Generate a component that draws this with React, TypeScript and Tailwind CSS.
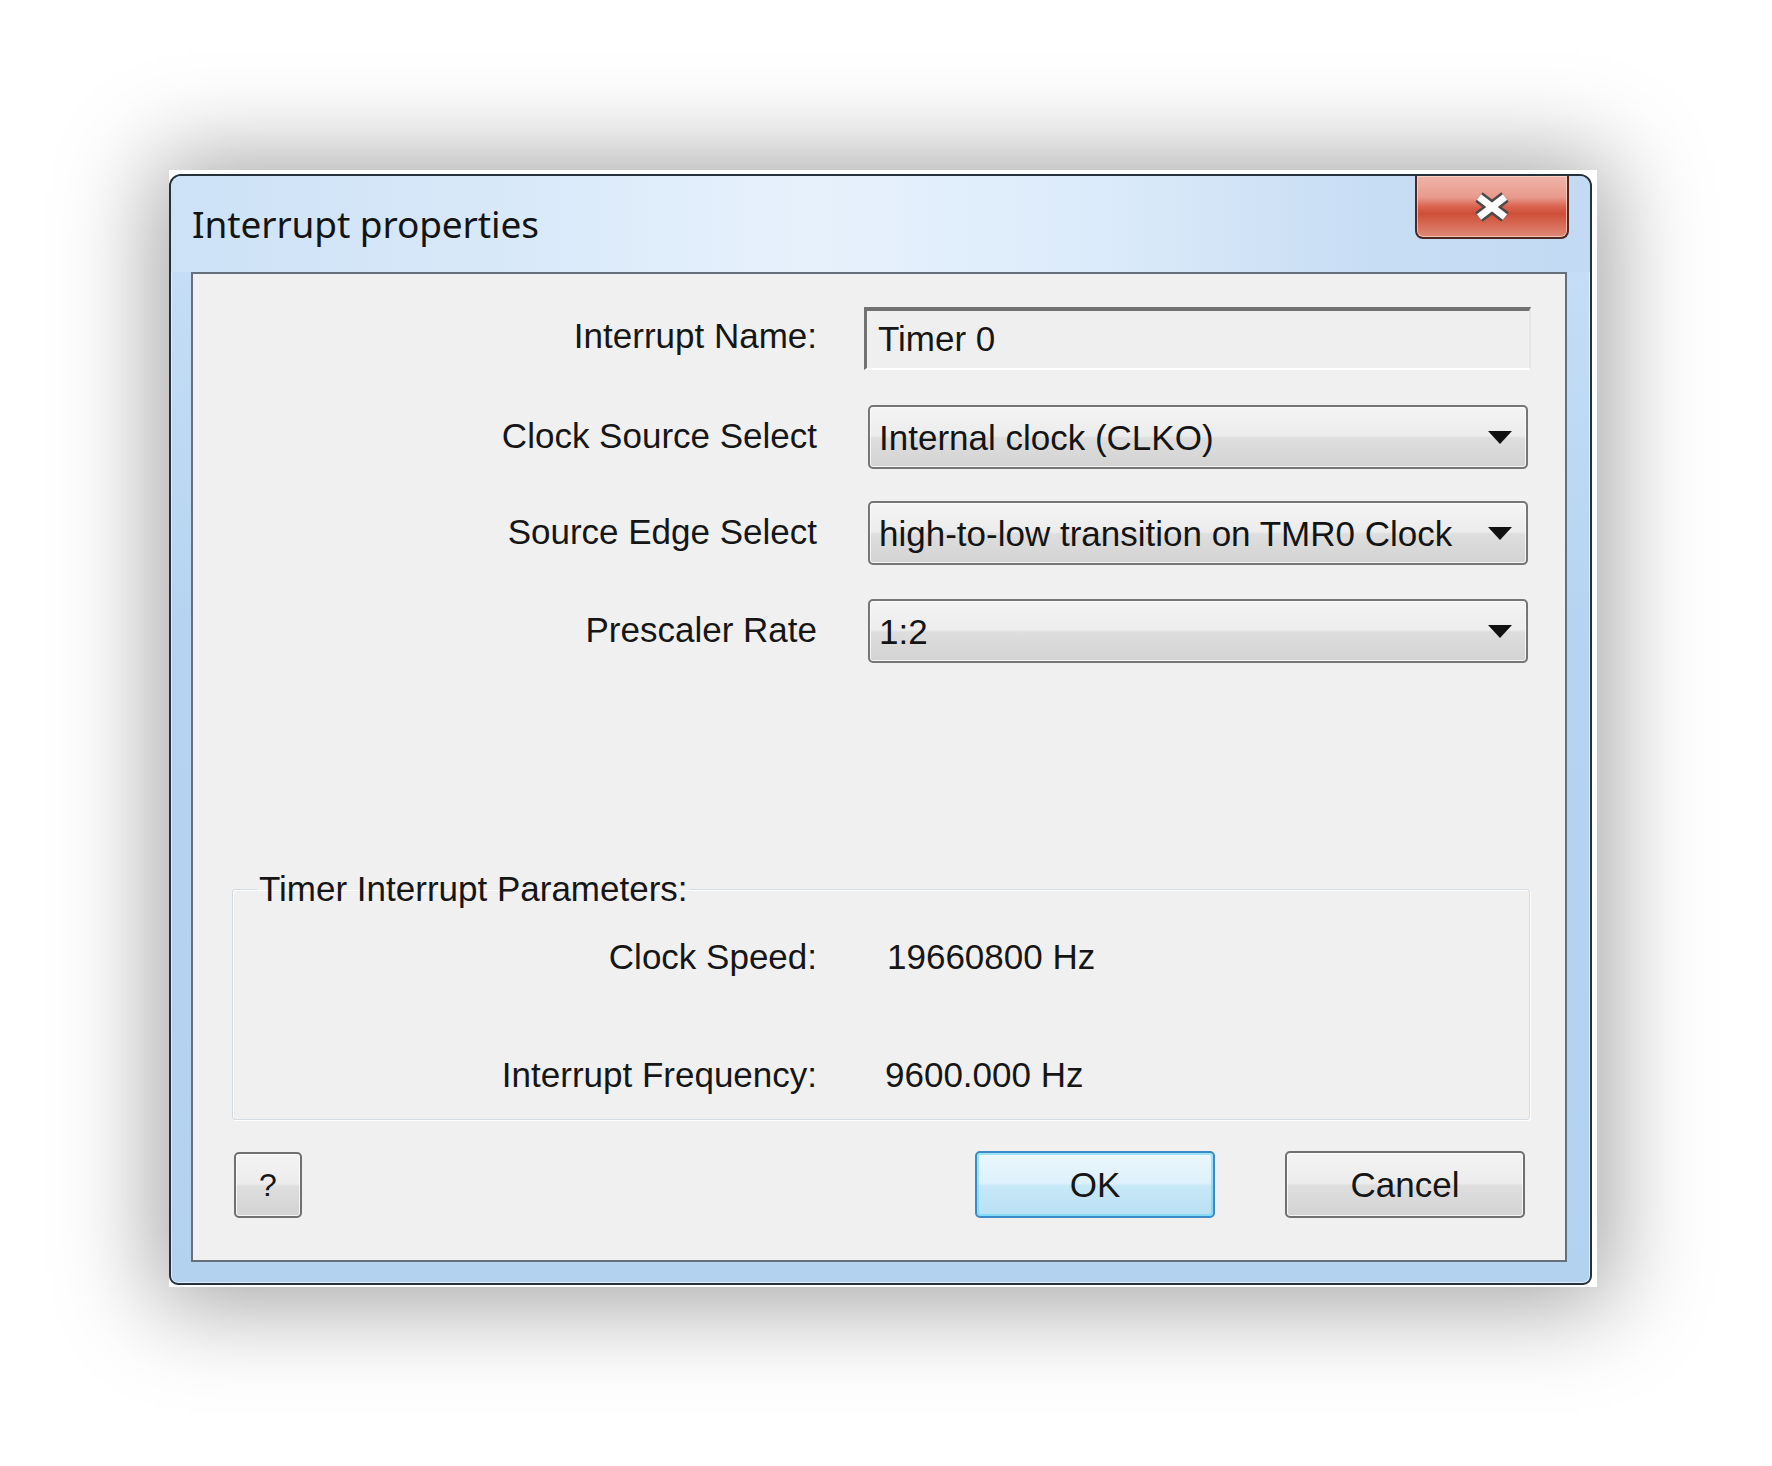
import React from "react";

function Arrow() {
  return (
    <svg width="24" height="13" viewBox="0 0 24 13" className="shrink-0">
      <polygon points="0,0 24,0 12,13" fill="#111111" />
    </svg>
  );
}

function Dropdown({ text }: { text: string }) {
  return (
    <div className="ml-[51px] w-[660px] h-[64px] rounded-[5px] border-2 border-[#767676] bg-[linear-gradient(180deg,#f4f4f4_0%,#ececec_48%,#dedede_52%,#d3d3d3_100%)] shadow-[inset_0_0_0_1px_rgba(255,255,255,0.75)] flex items-center justify-between pl-[9px] pr-[14px]">
      <span className="text-[35px] text-[#141414] leading-none whitespace-nowrap">{text}</span>
      <Arrow />
    </div>
  );
}

export default function App() {
  return (
    <div className="w-[1772px] h-[1466px] bg-white pl-[169px] pt-[170px] font-['Liberation_Sans',Arial,sans-serif]">
      <div className="w-[1428px] h-[1117px] bg-white pt-[4px] pr-[5px] pb-[2px] shadow-[0_4px_90px_14px_rgba(0,0,0,0.36)]">
        <div className="w-full h-full rounded-t-[12px] rounded-b-[9px] border-2 border-[#27313b] bg-[linear-gradient(180deg,#c9e0f7_0%,#b6d4f1_40%,#b3d2f0_100%)] shadow-[inset_0_0_0_1px_rgba(255,255,255,0.55)] flex flex-col overflow-hidden">
          {/* Title bar */}
          <div className="h-[96px] shrink-0 flex items-start justify-between bg-[linear-gradient(90deg,#cde2f7_0%,#d9e9f9_25%,#e7f1fc_45%,#dcebfa_65%,#c7ddf4_85%,#c2daf3_100%)]">
            <div className="self-center pl-[21px] pb-[2px] text-[37px] leading-none text-[#141414] font-['Noto_Sans','Open_Sans',sans-serif] tracking-[-0.1px]">
              Interrupt properties
            </div>
            <div className="mr-[21px] w-[154px] h-[63px] rounded-b-[8px] border-2 border-t-0 border-[#4b2822] bg-[linear-gradient(180deg,#f0b4aa_0%,#e89a8c_35%,#d9634f_50%,#cf4f38_62%,#df8a77_100%)] shadow-[inset_0_0_0_1px_rgba(255,225,215,0.65)] flex items-center justify-center">
              <svg width="42" height="32" viewBox="0 0 42 32">
                <g strokeLinecap="butt">
                  <line x1="8" y1="6" x2="34" y2="26" stroke="#4a4a4a" strokeWidth="12" />
                  <line x1="34" y1="6" x2="8" y2="26" stroke="#4a4a4a" strokeWidth="12" />
                  <line x1="8" y1="6" x2="34" y2="26" stroke="#ffffff" strokeWidth="7" />
                  <line x1="34" y1="6" x2="8" y2="26" stroke="#ffffff" strokeWidth="7" />
                </g>
              </svg>
            </div>
          </div>

          {/* Frame body */}
          <div className="flex-1 flex pl-[20px] pr-[23px] pb-[21px]">
            <div className="flex-1 border-2 border-[#67707a] bg-[#f0f0f0] flex flex-col text-[#161616]">
              <div className="pt-[33px] flex flex-col">
                <div className="flex items-center">
                  <div className="w-[624px] text-right text-[35px] leading-none pb-[6px]">Interrupt Name:</div>
                  <div className="ml-[47px] w-[667px] h-[63px] border-t-[4px] border-l-[3px] border-t-[#727272] border-l-[#727272] border-r-2 border-b-2 border-r-[#e6e6e6] border-b-white bg-[#efefef] flex items-center pl-[11px]">
                    <span className="text-[35px] leading-none pb-[3px]">Timer 0</span>
                  </div>
                </div>

                <div className="flex items-center mt-[35px]">
                  <div className="w-[624px] text-right text-[35px] leading-none pb-[3px]">Clock Source Select</div>
                  <Dropdown text="Internal clock (CLKO)" />
                </div>

                <div className="flex items-center mt-[32px]">
                  <div className="w-[624px] text-right text-[35px] leading-none pb-[3px]">Source Edge Select</div>
                  <Dropdown text="high-to-low transition on TMR0 Clock" />
                </div>

                <div className="flex items-center mt-[34px]">
                  <div className="w-[624px] text-right text-[35px] leading-none pb-[3px]">Prescaler Rate</div>
                  <Dropdown text="1:2" />
                </div>
              </div>

              {/* Group box */}
              <fieldset className="mt-[206px] ml-[39px] mr-[35px] border border-[#d3dce3] rounded-[3px] shadow-[inset_1px_1px_0_#ffffff,1px_1px_0_#ffffff] pb-[25px]">
                <legend className="ml-[24px] px-[2px] text-[35px] leading-[40px]">Timer Interrupt Parameters:</legend>
                <div className="mt-[27px] flex items-center h-[40px]">
                  <div className="w-[584px] text-right text-[35px] leading-none">Clock Speed:</div>
                  <div className="ml-[70px] text-[35px] leading-none">19660800 Hz</div>
                </div>
                <div className="mt-[78px] flex items-center h-[40px]">
                  <div className="w-[584px] text-right text-[35px] leading-none">Interrupt Frequency:</div>
                  <div className="ml-[68px] text-[35px] leading-none">9600.000 Hz</div>
                </div>
              </fieldset>

              {/* Buttons */}
              <div className="mt-[31px] flex items-center pl-[41px] pr-[40px]">
                <div className="w-[68px] h-[66px] rounded-[5px] border-2 border-[#707070] bg-[linear-gradient(180deg,#f4f4f4_0%,#ececec_48%,#dedede_52%,#d3d3d3_100%)] shadow-[inset_0_0_0_1px_rgba(255,255,255,0.75)] flex items-center justify-center text-[32px] leading-none">
                  ?
                </div>
                <div className="ml-auto w-[240px] h-[67px] rounded-[5px] border-2 border-[#3c8bc6] bg-[linear-gradient(180deg,#ecf7fd_0%,#ddf1fc_48%,#c8e8f8_52%,#b9e0f4_100%)] shadow-[inset_0_0_0_2px_rgba(90,215,250,0.55)] flex items-center justify-center text-[35px] leading-none">
                  OK
                </div>
                <div className="ml-[70px] w-[240px] h-[67px] rounded-[5px] border-2 border-[#707070] bg-[linear-gradient(180deg,#f4f4f4_0%,#ececec_48%,#dedede_52%,#d3d3d3_100%)] shadow-[inset_0_0_0_1px_rgba(255,255,255,0.75)] flex items-center justify-center text-[35px] leading-none">
                  Cancel
                </div>
              </div>
            </div>
          </div>
        </div>
      </div>
    </div>
  );
}
